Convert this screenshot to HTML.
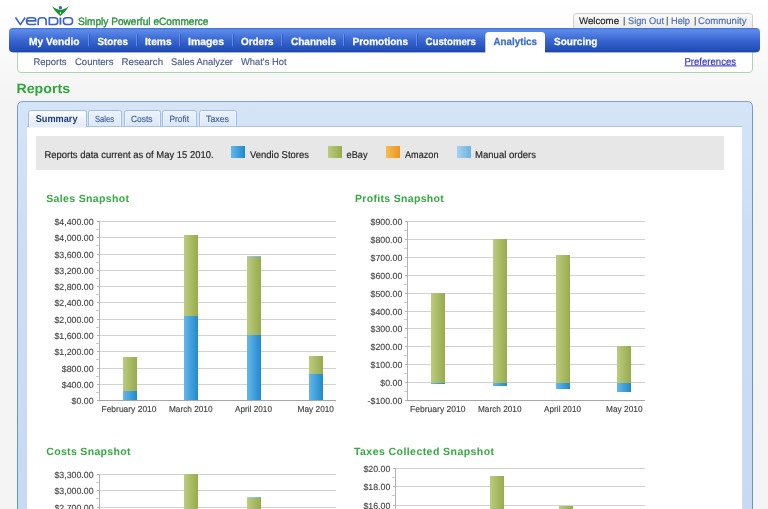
<!DOCTYPE html>
<html><head><meta charset="utf-8"><title>Vendio Reports</title>
<style>
html,body{margin:0;padding:0;width:768px;height:509px;overflow:hidden;background:#f2f2f2;font-family:"Liberation Sans", sans-serif;}
svg{display:block;will-change:transform} text{text-rendering:geometricPrecision}
</style></head><body>
<svg width="768" height="509" viewBox="0 0 768 509">
<defs>
<linearGradient id="bg" x1="0" y1="0" x2="0" y2="1" gradientUnits="objectBoundingBox"><stop offset="0" stop-color="#ffffff"/><stop offset="0.25" stop-color="#fdfdfd"/><stop offset="1" stop-color="#f4f4f4"/></linearGradient>
<linearGradient id="nav" x1="0" y1="0" x2="0" y2="1"><stop offset="0" stop-color="#3e6fd8"/><stop offset="0.08" stop-color="#5d8ce9"/><stop offset="0.5" stop-color="#3966d2"/><stop offset="1" stop-color="#1b48b0"/></linearGradient>
<linearGradient id="atab" x1="0" y1="0" x2="0" y2="1"><stop offset="0" stop-color="#ffffff"/><stop offset="1" stop-color="#f4f6fb"/></linearGradient>
<linearGradient id="wel" x1="0" y1="0" x2="0" y2="1"><stop offset="0" stop-color="#fbfbfb"/><stop offset="1" stop-color="#ececec"/></linearGradient>
<linearGradient id="tab" x1="0" y1="0" x2="0" y2="1"><stop offset="0" stop-color="#edf3fb"/><stop offset="1" stop-color="#dae6f7"/></linearGradient>
<linearGradient id="tabA" x1="0" y1="0" x2="0" y2="1"><stop offset="0" stop-color="#ffffff"/><stop offset="1" stop-color="#dfe9f8"/></linearGradient>
<linearGradient id="gB" x1="0" y1="0" x2="1" y2="0"><stop offset="0" stop-color="#64b7ea"/><stop offset="1" stop-color="#2189cc"/></linearGradient>
<linearGradient id="gG" x1="0" y1="0" x2="1" y2="0"><stop offset="0" stop-color="#bccb80"/><stop offset="1" stop-color="#97ab4b"/></linearGradient>
<linearGradient id="gO" x1="0" y1="0" x2="1" y2="0"><stop offset="0" stop-color="#f7bd52"/><stop offset="1" stop-color="#e8961e"/></linearGradient>
<linearGradient id="gL" x1="0" y1="0" x2="1" y2="0"><stop offset="0" stop-color="#a6d2ef"/><stop offset="1" stop-color="#6cb3e0"/></linearGradient>
<linearGradient id="panel" x1="0" y1="0" x2="0" y2="1"><stop offset="0" stop-color="#d6e4f7"/><stop offset="0.3" stop-color="#cddef4"/><stop offset="1" stop-color="#c8daf2"/></linearGradient>
<linearGradient id="pborder" x1="0" y1="0" x2="0" y2="1"><stop offset="0" stop-color="#80a4d8"/><stop offset="0.03" stop-color="#7298d2"/><stop offset="1" stop-color="#6a92d0"/></linearGradient>
</defs>
<rect x="0" y="0" width="768" height="509" fill="#f4f4f4"/>
<rect x="0" y="0" width="768" height="100" fill="url(#bg)"/>
<g fill="none" stroke="#3a62cc" stroke-width="1.6" stroke-linejoin="round">
<path d="M15.5,17.5 L20.4,24.6 L25.2,17.5"/>
<path d="M36,23.8 C35.6,24.3 35,24.5 34.2,24.5 H29.6 Q26.6,24.5 26.6,21.5 V20.4 Q26.6,17.8 29.6,17.8 H33 Q35.8,17.8 35.8,20.4 V20.9 H26.6"/>
<path d="M38.2,25.3 V20.6 Q38.2,17.8 41.2,17.8 H43.2 Q46.1,17.8 46.1,20.6 V25.3"/>
<path d="M49.3,17.8 H54.8 Q57.7,17.8 57.7,20.6 V21.7 Q57.7,24.5 54.8,24.5 H49.3 Z"/>
<path d="M60.4,17.6 V24.7" stroke-width="1.8"/>
<rect x="63.4" y="17.8" width="9.1" height="6.7" rx="2.9" ry="2.9"/>
</g>
<path d="M52.1,6.0 Q56.5,9.8 60.4,9.8 Q64.3,9.8 69.0,6.0 Q66.2,11.6 60.4,15.9 Q54.6,11.6 52.1,6.0 Z" fill="#1a9430"/>
<ellipse cx="60.4" cy="13" rx="0.6" ry="0.9" fill="#ffffff"/>
<circle cx="60.4" cy="7.65" r="1.7" fill="#3a62cc"/>

<path d="M573.5,28.5 V16 Q573.5,13.5 576,13.5 H750 Q752.5,13.5 752.5,16 V28.5" fill="url(#wel)" stroke="#cfcfcf" stroke-width="1"/>
<rect x="623.7" y="17" width="1" height="8.5" fill="#555"/>
<rect x="666.7" y="17" width="1" height="8.5" fill="#555"/>
<rect x="694.7" y="17" width="1" height="8.5" fill="#555"/>
<path d="M17.5,48 V69 Q17.5,72.5 21,72.5 H749 Q752.5,72.5 752.5,69 V48" fill="#ffffff" stroke="#a9d6ae" stroke-width="1"/>
<rect x="9" y="28" width="751" height="24.2" rx="4" ry="4" fill="url(#nav)"/>
<rect x="13" y="51.6" width="743" height="0.6" fill="#1a45a8"/>
<rect x="88" y="34" width="1" height="12" fill="#7098e6" opacity="0.75"/>
<rect x="89" y="34" width="1" height="12" fill="#2452bd" opacity="0.6"/>
<rect x="136" y="34" width="1" height="12" fill="#7098e6" opacity="0.75"/>
<rect x="137" y="34" width="1" height="12" fill="#2452bd" opacity="0.6"/>
<rect x="179" y="34" width="1" height="12" fill="#7098e6" opacity="0.75"/>
<rect x="180" y="34" width="1" height="12" fill="#2452bd" opacity="0.6"/>
<rect x="232" y="34" width="1" height="12" fill="#7098e6" opacity="0.75"/>
<rect x="233" y="34" width="1" height="12" fill="#2452bd" opacity="0.6"/>
<rect x="281" y="34" width="1" height="12" fill="#7098e6" opacity="0.75"/>
<rect x="282" y="34" width="1" height="12" fill="#2452bd" opacity="0.6"/>
<rect x="343" y="34" width="1" height="12" fill="#7098e6" opacity="0.75"/>
<rect x="344" y="34" width="1" height="12" fill="#2452bd" opacity="0.6"/>
<rect x="416" y="34" width="1" height="12" fill="#7098e6" opacity="0.75"/>
<rect x="417" y="34" width="1" height="12" fill="#2452bd" opacity="0.6"/>
<path d="M485.3,53.2 V35.5 Q485.3,32 488.8,32 H541.5 Q545,32 545,35.5 V53.2 Z" fill="#ffffff"/>
<path d="M17.5,520 V107 Q17.5,101.5 23,101.5 H747 Q752.5,101.5 752.5,107 V520" fill="url(#panel)" stroke="url(#pborder)" stroke-width="1"/>
<rect x="27" y="126.5" width="715" height="400" fill="#ffffff"/>
<rect x="27" y="126" width="715" height="1" fill="#a9c2e6"/>
<path d="M28.5,127 V112.5 Q28.5,110.5 30.5,110.5 H84.5 Q86.5,110.5 86.5,112.5 V127" fill="url(#tabA)" stroke="#9fbde6" stroke-width="1"/>
<path d="M29.5,127 V113 Q29.5,111.5 31.0,111.5 H84.0 Q85.5,111.5 85.5,113 V127" fill="none" stroke="#f3f7fd" stroke-width="1" opacity="0.7"/>
<path d="M88.5,127 V112.5 Q88.5,110.5 90.5,110.5 H119.5 Q121.5,110.5 121.5,112.5 V127" fill="url(#tab)" stroke="#9fbde6" stroke-width="1"/>
<path d="M89.5,127 V113 Q89.5,111.5 91.0,111.5 H119.0 Q120.5,111.5 120.5,113 V127" fill="none" stroke="#f3f7fd" stroke-width="1" opacity="0.7"/>
<path d="M124.5,127 V112.5 Q124.5,110.5 126.5,110.5 H158.5 Q160.5,110.5 160.5,112.5 V127" fill="url(#tab)" stroke="#9fbde6" stroke-width="1"/>
<path d="M125.5,127 V113 Q125.5,111.5 127.0,111.5 H158.0 Q159.5,111.5 159.5,113 V127" fill="none" stroke="#f3f7fd" stroke-width="1" opacity="0.7"/>
<path d="M162.5,127 V112.5 Q162.5,110.5 164.5,110.5 H194.5 Q196.5,110.5 196.5,112.5 V127" fill="url(#tab)" stroke="#9fbde6" stroke-width="1"/>
<path d="M163.5,127 V113 Q163.5,111.5 165.0,111.5 H194.0 Q195.5,111.5 195.5,113 V127" fill="none" stroke="#f3f7fd" stroke-width="1" opacity="0.7"/>
<path d="M199.5,127 V112.5 Q199.5,110.5 201.5,110.5 H234.5 Q236.5,110.5 236.5,112.5 V127" fill="url(#tab)" stroke="#9fbde6" stroke-width="1"/>
<path d="M200.5,127 V113 Q200.5,111.5 202.0,111.5 H234.0 Q235.5,111.5 235.5,113 V127" fill="none" stroke="#f3f7fd" stroke-width="1" opacity="0.7"/>
<rect x="27" y="126" width="715" height="1" fill="#a9c2e6"/>
<rect x="29" y="125.5" width="57" height="2" fill="#e6eefa"/>
<rect x="36" y="136" width="688" height="34" fill="#e7e7e7"/>
<rect x="231" y="146" width="14" height="12" fill="url(#gB)"/>
<rect x="328" y="146" width="14" height="12" fill="url(#gG)"/>
<rect x="386" y="146" width="14" height="12" fill="url(#gO)"/>
<rect x="457" y="146" width="14" height="12" fill="url(#gL)"/>
<rect x="99" y="221" width="237" height="1" fill="#d2d2cf"/>
<rect x="99" y="237" width="237" height="1" fill="#d2d2cf"/>
<rect x="99" y="254" width="237" height="1" fill="#d2d2cf"/>
<rect x="99" y="270" width="237" height="1" fill="#d2d2cf"/>
<rect x="99" y="286" width="237" height="1" fill="#d2d2cf"/>
<rect x="99" y="302" width="237" height="1" fill="#d2d2cf"/>
<rect x="99" y="319" width="237" height="1" fill="#d2d2cf"/>
<rect x="99" y="335" width="237" height="1" fill="#d2d2cf"/>
<rect x="99" y="351" width="237" height="1" fill="#d2d2cf"/>
<rect x="99" y="368" width="237" height="1" fill="#d2d2cf"/>
<rect x="99" y="384" width="237" height="1" fill="#d2d2cf"/>
<rect x="123" y="391" width="14" height="9" fill="url(#gB)"/>
<rect x="123" y="357" width="14" height="34" fill="url(#gG)"/>
<rect x="184" y="316" width="14" height="84" fill="url(#gB)"/>
<rect x="184" y="235" width="14" height="81" fill="url(#gG)"/>
<rect x="247" y="335" width="14" height="65" fill="url(#gB)"/>
<rect x="247" y="257" width="14" height="78" fill="url(#gG)"/>
<rect x="247" y="256" width="14" height="1" fill="url(#gL)"/>
<rect x="309" y="374" width="14" height="26" fill="url(#gB)"/>
<rect x="309" y="356" width="14" height="18" fill="url(#gG)"/>
<rect x="99" y="221" width="1" height="180" fill="#b3b3b3"/>
<rect x="99" y="400" width="237" height="1" fill="#a6a6a6"/>
<rect x="97" y="221" width="2" height="1" fill="#b3b3b3"/>
<rect x="96" y="229" width="3" height="1" fill="#b3b3b3" opacity="0.7"/>
<rect x="97" y="237" width="2" height="1" fill="#b3b3b3"/>
<rect x="96" y="245" width="3" height="1" fill="#b3b3b3" opacity="0.7"/>
<rect x="97" y="254" width="2" height="1" fill="#b3b3b3"/>
<rect x="96" y="262" width="3" height="1" fill="#b3b3b3" opacity="0.7"/>
<rect x="97" y="270" width="2" height="1" fill="#b3b3b3"/>
<rect x="96" y="278" width="3" height="1" fill="#b3b3b3" opacity="0.7"/>
<rect x="97" y="286" width="2" height="1" fill="#b3b3b3"/>
<rect x="96" y="294" width="3" height="1" fill="#b3b3b3" opacity="0.7"/>
<rect x="97" y="302" width="2" height="1" fill="#b3b3b3"/>
<rect x="96" y="310" width="3" height="1" fill="#b3b3b3" opacity="0.7"/>
<rect x="97" y="319" width="2" height="1" fill="#b3b3b3"/>
<rect x="96" y="327" width="3" height="1" fill="#b3b3b3" opacity="0.7"/>
<rect x="97" y="335" width="2" height="1" fill="#b3b3b3"/>
<rect x="96" y="343" width="3" height="1" fill="#b3b3b3" opacity="0.7"/>
<rect x="97" y="351" width="2" height="1" fill="#b3b3b3"/>
<rect x="96" y="359" width="3" height="1" fill="#b3b3b3" opacity="0.7"/>
<rect x="97" y="368" width="2" height="1" fill="#b3b3b3"/>
<rect x="96" y="376" width="3" height="1" fill="#b3b3b3" opacity="0.7"/>
<rect x="97" y="384" width="2" height="1" fill="#b3b3b3"/>
<rect x="96" y="392" width="3" height="1" fill="#b3b3b3" opacity="0.7"/>
<rect x="97" y="400" width="2" height="1" fill="#b3b3b3"/>
<text x="93.6" y="224.70" text-anchor="end" font-family='"Liberation Sans", sans-serif' font-size="8.8" fill="#444" stroke="#444" stroke-width="0.12">$4,400.00</text>
<text x="93.6" y="240.70" text-anchor="end" font-family='"Liberation Sans", sans-serif' font-size="8.8" fill="#444" stroke="#444" stroke-width="0.12">$4,000.00</text>
<text x="93.6" y="257.70" text-anchor="end" font-family='"Liberation Sans", sans-serif' font-size="8.8" fill="#444" stroke="#444" stroke-width="0.12">$3,600.00</text>
<text x="93.6" y="273.70" text-anchor="end" font-family='"Liberation Sans", sans-serif' font-size="8.8" fill="#444" stroke="#444" stroke-width="0.12">$3,200.00</text>
<text x="93.6" y="289.70" text-anchor="end" font-family='"Liberation Sans", sans-serif' font-size="8.8" fill="#444" stroke="#444" stroke-width="0.12">$2,800.00</text>
<text x="93.6" y="305.70" text-anchor="end" font-family='"Liberation Sans", sans-serif' font-size="8.8" fill="#444" stroke="#444" stroke-width="0.12">$2,400.00</text>
<text x="93.6" y="322.70" text-anchor="end" font-family='"Liberation Sans", sans-serif' font-size="8.8" fill="#444" stroke="#444" stroke-width="0.12">$2,000.00</text>
<text x="93.6" y="338.70" text-anchor="end" font-family='"Liberation Sans", sans-serif' font-size="8.8" fill="#444" stroke="#444" stroke-width="0.12">$1,600.00</text>
<text x="93.6" y="354.70" text-anchor="end" font-family='"Liberation Sans", sans-serif' font-size="8.8" fill="#444" stroke="#444" stroke-width="0.12">$1,200.00</text>
<text x="93.6" y="371.70" text-anchor="end" font-family='"Liberation Sans", sans-serif' font-size="8.8" fill="#444" stroke="#444" stroke-width="0.12">$800.00</text>
<text x="93.6" y="387.70" text-anchor="end" font-family='"Liberation Sans", sans-serif' font-size="8.8" fill="#444" stroke="#444" stroke-width="0.12">$400.00</text>
<text x="93.6" y="403.70" text-anchor="end" font-family='"Liberation Sans", sans-serif' font-size="8.8" fill="#444" stroke="#444" stroke-width="0.12">$0.00</text>
<rect x="407" y="221" width="238" height="1" fill="#d2d2cf"/>
<rect x="407" y="239" width="238" height="1" fill="#d2d2cf"/>
<rect x="407" y="257" width="238" height="1" fill="#d2d2cf"/>
<rect x="407" y="275" width="238" height="1" fill="#d2d2cf"/>
<rect x="407" y="293" width="238" height="1" fill="#d2d2cf"/>
<rect x="407" y="311" width="238" height="1" fill="#d2d2cf"/>
<rect x="407" y="328" width="238" height="1" fill="#d2d2cf"/>
<rect x="407" y="346" width="238" height="1" fill="#d2d2cf"/>
<rect x="407" y="364" width="238" height="1" fill="#d2d2cf"/>
<rect x="407" y="382" width="238" height="1" fill="#d2d2cf"/>
<rect x="431" y="293" width="14" height="90" fill="url(#gG)"/>
<rect x="431" y="383" width="14" height="1" fill="url(#gB)"/>
<rect x="493" y="239" width="14" height="144" fill="url(#gG)"/>
<rect x="493" y="383" width="14" height="3" fill="url(#gB)"/>
<rect x="556" y="255" width="14" height="128" fill="url(#gG)"/>
<rect x="556" y="383" width="14" height="6" fill="url(#gB)"/>
<rect x="617" y="346" width="14" height="37" fill="url(#gG)"/>
<rect x="617" y="383" width="14" height="9" fill="url(#gB)"/>
<rect x="407" y="221" width="1" height="180" fill="#b3b3b3"/>
<rect x="407" y="400" width="238" height="1" fill="#a6a6a6"/>
<rect x="405" y="221" width="2" height="1" fill="#b3b3b3"/>
<rect x="404" y="230" width="3" height="1" fill="#b3b3b3" opacity="0.7"/>
<rect x="405" y="239" width="2" height="1" fill="#b3b3b3"/>
<rect x="404" y="248" width="3" height="1" fill="#b3b3b3" opacity="0.7"/>
<rect x="405" y="257" width="2" height="1" fill="#b3b3b3"/>
<rect x="404" y="266" width="3" height="1" fill="#b3b3b3" opacity="0.7"/>
<rect x="405" y="275" width="2" height="1" fill="#b3b3b3"/>
<rect x="404" y="284" width="3" height="1" fill="#b3b3b3" opacity="0.7"/>
<rect x="405" y="293" width="2" height="1" fill="#b3b3b3"/>
<rect x="404" y="302" width="3" height="1" fill="#b3b3b3" opacity="0.7"/>
<rect x="405" y="311" width="2" height="1" fill="#b3b3b3"/>
<rect x="404" y="319" width="3" height="1" fill="#b3b3b3" opacity="0.7"/>
<rect x="405" y="328" width="2" height="1" fill="#b3b3b3"/>
<rect x="404" y="337" width="3" height="1" fill="#b3b3b3" opacity="0.7"/>
<rect x="405" y="346" width="2" height="1" fill="#b3b3b3"/>
<rect x="404" y="355" width="3" height="1" fill="#b3b3b3" opacity="0.7"/>
<rect x="405" y="364" width="2" height="1" fill="#b3b3b3"/>
<rect x="404" y="373" width="3" height="1" fill="#b3b3b3" opacity="0.7"/>
<rect x="405" y="382" width="2" height="1" fill="#b3b3b3"/>
<rect x="404" y="391" width="3" height="1" fill="#b3b3b3" opacity="0.7"/>
<rect x="405" y="400" width="2" height="1" fill="#b3b3b3"/>
<text x="402.3" y="224.70" text-anchor="end" font-family='"Liberation Sans", sans-serif' font-size="8.8" fill="#444" stroke="#444" stroke-width="0.12">$900.00</text>
<text x="402.3" y="242.70" text-anchor="end" font-family='"Liberation Sans", sans-serif' font-size="8.8" fill="#444" stroke="#444" stroke-width="0.12">$800.00</text>
<text x="402.3" y="260.70" text-anchor="end" font-family='"Liberation Sans", sans-serif' font-size="8.8" fill="#444" stroke="#444" stroke-width="0.12">$700.00</text>
<text x="402.3" y="278.70" text-anchor="end" font-family='"Liberation Sans", sans-serif' font-size="8.8" fill="#444" stroke="#444" stroke-width="0.12">$600.00</text>
<text x="402.3" y="296.70" text-anchor="end" font-family='"Liberation Sans", sans-serif' font-size="8.8" fill="#444" stroke="#444" stroke-width="0.12">$500.00</text>
<text x="402.3" y="314.70" text-anchor="end" font-family='"Liberation Sans", sans-serif' font-size="8.8" fill="#444" stroke="#444" stroke-width="0.12">$400.00</text>
<text x="402.3" y="331.70" text-anchor="end" font-family='"Liberation Sans", sans-serif' font-size="8.8" fill="#444" stroke="#444" stroke-width="0.12">$300.00</text>
<text x="402.3" y="349.70" text-anchor="end" font-family='"Liberation Sans", sans-serif' font-size="8.8" fill="#444" stroke="#444" stroke-width="0.12">$200.00</text>
<text x="402.3" y="367.70" text-anchor="end" font-family='"Liberation Sans", sans-serif' font-size="8.8" fill="#444" stroke="#444" stroke-width="0.12">$100.00</text>
<text x="402.3" y="385.70" text-anchor="end" font-family='"Liberation Sans", sans-serif' font-size="8.8" fill="#444" stroke="#444" stroke-width="0.12">$0.00</text>
<text x="402.3" y="403.70" text-anchor="end" font-family='"Liberation Sans", sans-serif' font-size="8.8" fill="#444" stroke="#444" stroke-width="0.12">-$100.00</text>
<rect x="99" y="474" width="237" height="1" fill="#d2d2cf"/>
<rect x="99" y="490" width="237" height="1" fill="#d2d2cf"/>
<rect x="99" y="507" width="237" height="1" fill="#d2d2cf"/>
<rect x="184" y="474" width="14" height="46" fill="url(#gG)"/>
<rect x="247" y="498" width="14" height="22" fill="url(#gG)"/>
<rect x="247" y="497" width="14" height="1" fill="url(#gL)"/>
<rect x="99" y="474" width="1" height="47" fill="#b3b3b3"/>
<rect x="97" y="474" width="2" height="1" fill="#b3b3b3"/>
<rect x="96" y="482" width="3" height="1" fill="#b3b3b3" opacity="0.7"/>
<rect x="97" y="490" width="2" height="1" fill="#b3b3b3"/>
<rect x="96" y="498" width="3" height="1" fill="#b3b3b3" opacity="0.7"/>
<rect x="97" y="507" width="2" height="1" fill="#b3b3b3"/>
<rect x="96" y="515" width="3" height="1" fill="#b3b3b3" opacity="0.7"/>
<text x="93.6" y="477.70" text-anchor="end" font-family='"Liberation Sans", sans-serif' font-size="8.8" fill="#444" stroke="#444" stroke-width="0.12">$3,300.00</text>
<text x="93.6" y="493.70" text-anchor="end" font-family='"Liberation Sans", sans-serif' font-size="8.8" fill="#444" stroke="#444" stroke-width="0.12">$3,000.00</text>
<text x="93.6" y="510.70" text-anchor="end" font-family='"Liberation Sans", sans-serif' font-size="8.8" fill="#444" stroke="#444" stroke-width="0.12">$2,700.00</text>
<text x="93.6" y="526.70" text-anchor="end" font-family='"Liberation Sans", sans-serif' font-size="8.8" fill="#444" stroke="#444" stroke-width="0.12">$2,400.00</text>
<rect x="395" y="468" width="250" height="1" fill="#d2d2cf"/>
<rect x="395" y="486" width="250" height="1" fill="#d2d2cf"/>
<rect x="395" y="505" width="250" height="1" fill="#d2d2cf"/>
<rect x="490" y="476" width="14" height="44" fill="url(#gG)"/>
<rect x="559" y="506" width="14" height="14" fill="url(#gG)"/>
<rect x="395" y="468" width="1" height="53" fill="#b3b3b3"/>
<rect x="393" y="468" width="2" height="1" fill="#b3b3b3"/>
<rect x="392" y="477" width="3" height="1" fill="#b3b3b3" opacity="0.7"/>
<rect x="393" y="486" width="2" height="1" fill="#b3b3b3"/>
<rect x="392" y="495" width="3" height="1" fill="#b3b3b3" opacity="0.7"/>
<rect x="393" y="505" width="2" height="1" fill="#b3b3b3"/>
<rect x="392" y="514" width="3" height="1" fill="#b3b3b3" opacity="0.7"/>
<text x="390.3" y="471.70" text-anchor="end" font-family='"Liberation Sans", sans-serif' font-size="8.8" fill="#444" stroke="#444" stroke-width="0.12">$20.00</text>
<text x="390.3" y="489.70" text-anchor="end" font-family='"Liberation Sans", sans-serif' font-size="8.8" fill="#444" stroke="#444" stroke-width="0.12">$18.00</text>
<text x="390.3" y="508.70" text-anchor="end" font-family='"Liberation Sans", sans-serif' font-size="8.8" fill="#444" stroke="#444" stroke-width="0.12">$16.00</text>
<text x="390.3" y="526.70" text-anchor="end" font-family='"Liberation Sans", sans-serif' font-size="8.8" fill="#444" stroke="#444" stroke-width="0.12">$14.00</text>
<rect x="684.5" y="65.4" width="51.8" height="1" fill="#2c2cc8"/>
<text x="78.00" y="25.2" font-family='"Liberation Sans", sans-serif' font-size="10.6" font-weight="normal" fill="#2b9640" textLength="130.51" lengthAdjust="spacingAndGlyphs" stroke="#2b9640" stroke-width="0.4">Simply Powerful eCommerce</text>
<text x="579.00" y="23.8" font-family='"Liberation Sans", sans-serif' font-size="9.6" font-weight="normal" fill="#202020" textLength="40.02" lengthAdjust="spacingAndGlyphs" stroke="#202020" stroke-width="0.15">Welcome</text>
<text x="628.00" y="23.8" font-family='"Liberation Sans", sans-serif' font-size="9.6" font-weight="normal" fill="#4a6cb0" textLength="36.00" lengthAdjust="spacingAndGlyphs" stroke="#4a6cb0" stroke-width="0.15">Sign Out</text>
<text x="671.00" y="23.8" font-family='"Liberation Sans", sans-serif' font-size="9.6" font-weight="normal" fill="#4a6cb0" textLength="19.00" lengthAdjust="spacingAndGlyphs" stroke="#4a6cb0" stroke-width="0.15">Help</text>
<text x="698.00" y="23.8" font-family='"Liberation Sans", sans-serif' font-size="9.6" font-weight="normal" fill="#4a6cb0" textLength="48.51" lengthAdjust="spacingAndGlyphs" stroke="#4a6cb0" stroke-width="0.15">Community</text>
<text x="29.00" y="44.6" font-family='"Liberation Sans", sans-serif' font-size="10.3" font-weight="bold" fill="#ffffff" textLength="50.51" lengthAdjust="spacingAndGlyphs" stroke="#ffffff" stroke-width="0.25">My Vendio</text>
<text x="97.50" y="44.6" font-family='"Liberation Sans", sans-serif' font-size="10.3" font-weight="bold" fill="#ffffff" textLength="30.52" lengthAdjust="spacingAndGlyphs" stroke="#ffffff" stroke-width="0.25">Stores</text>
<text x="145.00" y="44.6" font-family='"Liberation Sans", sans-serif' font-size="10.3" font-weight="bold" fill="#ffffff" textLength="26.58" lengthAdjust="spacingAndGlyphs" stroke="#ffffff" stroke-width="0.25">Items</text>
<text x="188.00" y="44.6" font-family='"Liberation Sans", sans-serif' font-size="10.3" font-weight="bold" fill="#ffffff" textLength="36.00" lengthAdjust="spacingAndGlyphs" stroke="#ffffff" stroke-width="0.25">Images</text>
<text x="241.00" y="44.6" font-family='"Liberation Sans", sans-serif' font-size="10.3" font-weight="bold" fill="#ffffff" textLength="32.52" lengthAdjust="spacingAndGlyphs" stroke="#ffffff" stroke-width="0.25">Orders</text>
<text x="291.00" y="44.6" font-family='"Liberation Sans", sans-serif' font-size="10.3" font-weight="bold" fill="#ffffff" textLength="45.01" lengthAdjust="spacingAndGlyphs" stroke="#ffffff" stroke-width="0.25">Channels</text>
<text x="352.50" y="44.6" font-family='"Liberation Sans", sans-serif' font-size="10.3" font-weight="bold" fill="#ffffff" textLength="55.50" lengthAdjust="spacingAndGlyphs" stroke="#ffffff" stroke-width="0.25">Promotions</text>
<text x="425.50" y="44.6" font-family='"Liberation Sans", sans-serif' font-size="10.3" font-weight="bold" fill="#ffffff" textLength="50.51" lengthAdjust="spacingAndGlyphs" stroke="#ffffff" stroke-width="0.25">Customers</text>
<text x="493.50" y="44.6" font-family='"Liberation Sans", sans-serif' font-size="10.3" font-weight="bold" fill="#3b6cc9" textLength="43.51" lengthAdjust="spacingAndGlyphs" stroke="#3b6cc9" stroke-width="0.25">Analytics</text>
<text x="554.00" y="44.6" font-family='"Liberation Sans", sans-serif' font-size="10.3" font-weight="bold" fill="#ffffff" textLength="43.51" lengthAdjust="spacingAndGlyphs" stroke="#ffffff" stroke-width="0.25">Sourcing</text>
<text x="33.50" y="64.7" font-family='"Liberation Sans", sans-serif' font-size="9.7" font-weight="normal" fill="#4a5c8c" textLength="33.08" lengthAdjust="spacingAndGlyphs" stroke="#4a5c8c" stroke-width="0.15">Reports</text>
<text x="75.00" y="64.7" font-family='"Liberation Sans", sans-serif' font-size="9.7" font-weight="normal" fill="#4a5c8c" textLength="38.51" lengthAdjust="spacingAndGlyphs" stroke="#4a5c8c" stroke-width="0.15">Counters</text>
<text x="121.50" y="64.7" font-family='"Liberation Sans", sans-serif' font-size="9.7" font-weight="normal" fill="#4a5c8c" textLength="41.53" lengthAdjust="spacingAndGlyphs" stroke="#4a5c8c" stroke-width="0.15">Research</text>
<text x="171.00" y="64.7" font-family='"Liberation Sans", sans-serif' font-size="9.7" font-weight="normal" fill="#4a5c8c" textLength="62.00" lengthAdjust="spacingAndGlyphs" stroke="#4a5c8c" stroke-width="0.15">Sales Analyzer</text>
<text x="241.00" y="64.7" font-family='"Liberation Sans", sans-serif' font-size="9.7" font-weight="normal" fill="#4a5c8c" textLength="45.51" lengthAdjust="spacingAndGlyphs" stroke="#4a5c8c" stroke-width="0.15">What&#x27;s Hot</text>
<text x="684.50" y="64.7" font-family='"Liberation Sans", sans-serif' font-size="10.2" font-weight="normal" fill="#2c2cc8" textLength="51.51" lengthAdjust="spacingAndGlyphs" stroke="#2c2cc8" stroke-width="0.15">Preferences</text>
<text x="16.50" y="92.9" font-family='"Liberation Sans", sans-serif' font-size="13.5" font-weight="bold" fill="#2ea83a" textLength="53.53" lengthAdjust="spacingAndGlyphs">Reports</text>
<text x="35.75" y="121.9" font-family='"Liberation Sans", sans-serif' font-size="9.9" font-weight="bold" fill="#1f3a7a" textLength="41.76" lengthAdjust="spacingAndGlyphs">Summary</text>
<text x="95.00" y="121.9" font-family='"Liberation Sans", sans-serif' font-size="9.0" font-weight="normal" fill="#3d5c98" textLength="19.02" lengthAdjust="spacingAndGlyphs" stroke="#3d5c98" stroke-width="0.15">Sales</text>
<text x="131.00" y="121.9" font-family='"Liberation Sans", sans-serif' font-size="9.0" font-weight="normal" fill="#3d5c98" textLength="21.58" lengthAdjust="spacingAndGlyphs" stroke="#3d5c98" stroke-width="0.15">Costs</text>
<text x="169.50" y="121.9" font-family='"Liberation Sans", sans-serif' font-size="9.0" font-weight="normal" fill="#3d5c98" textLength="19.52" lengthAdjust="spacingAndGlyphs" stroke="#3d5c98" stroke-width="0.15">Profit</text>
<text x="206.00" y="121.9" font-family='"Liberation Sans", sans-serif' font-size="9.0" font-weight="normal" fill="#3d5c98" textLength="23.03" lengthAdjust="spacingAndGlyphs" stroke="#3d5c98" stroke-width="0.15">Taxes</text>
<text x="44.50" y="157.7" font-family='"Liberation Sans", sans-serif' font-size="9.9" font-weight="normal" fill="#222222" textLength="169.02" lengthAdjust="spacingAndGlyphs" stroke="#222222" stroke-width="0.15">Reports data current as of May 15 2010.</text>
<text x="250.00" y="157.7" font-family='"Liberation Sans", sans-serif' font-size="9.9" font-weight="normal" fill="#222222" textLength="59.00" lengthAdjust="spacingAndGlyphs" stroke="#222222" stroke-width="0.15">Vendio Stores</text>
<text x="346.50" y="157.7" font-family='"Liberation Sans", sans-serif' font-size="9.9" font-weight="normal" fill="#222222" textLength="21.02" lengthAdjust="spacingAndGlyphs" stroke="#222222" stroke-width="0.15">eBay</text>
<text x="405.00" y="157.7" font-family='"Liberation Sans", sans-serif' font-size="9.9" font-weight="normal" fill="#222222" textLength="33.51" lengthAdjust="spacingAndGlyphs" stroke="#222222" stroke-width="0.15">Amazon</text>
<text x="475.00" y="157.7" font-family='"Liberation Sans", sans-serif' font-size="9.9" font-weight="normal" fill="#222222" textLength="61.02" lengthAdjust="spacingAndGlyphs" stroke="#222222" stroke-width="0.15">Manual orders</text>
<text x="46.25" y="201.9" font-family='"Liberation Sans", sans-serif' font-size="10.5" font-weight="bold" fill="#33aa40" textLength="82.75" lengthAdjust="spacing">Sales Snapshot</text>
<text x="355.00" y="201.9" font-family='"Liberation Sans", sans-serif' font-size="10.5" font-weight="bold" fill="#33aa40" textLength="88.75" lengthAdjust="spacing">Profits Snapshot</text>
<text x="46.25" y="454.6" font-family='"Liberation Sans", sans-serif' font-size="10.5" font-weight="bold" fill="#33aa40" textLength="84.27" lengthAdjust="spacing">Costs Snapshot</text>
<text x="354.00" y="454.6" font-family='"Liberation Sans", sans-serif' font-size="10.5" font-weight="bold" fill="#33aa40" textLength="140.01" lengthAdjust="spacing">Taxes Collected Snapshot</text>
<text x="101.50" y="411.6" font-family='"Liberation Sans", sans-serif' font-size="8.7" font-weight="normal" fill="#444444" textLength="55.01" lengthAdjust="spacingAndGlyphs" stroke="#444444" stroke-width="0.15">February 2010</text>
<text x="169.00" y="411.6" font-family='"Liberation Sans", sans-serif' font-size="8.7" font-weight="normal" fill="#444444" textLength="43.51" lengthAdjust="spacingAndGlyphs" stroke="#444444" stroke-width="0.15">March 2010</text>
<text x="235.00" y="411.6" font-family='"Liberation Sans", sans-serif' font-size="8.7" font-weight="normal" fill="#444444" textLength="37.01" lengthAdjust="spacingAndGlyphs" stroke="#444444" stroke-width="0.15">April 2010</text>
<text x="297.50" y="411.6" font-family='"Liberation Sans", sans-serif' font-size="8.7" font-weight="normal" fill="#444444" textLength="36.50" lengthAdjust="spacingAndGlyphs" stroke="#444444" stroke-width="0.15">May 2010</text>
<text x="410.00" y="411.6" font-family='"Liberation Sans", sans-serif' font-size="8.7" font-weight="normal" fill="#444444" textLength="55.52" lengthAdjust="spacingAndGlyphs" stroke="#444444" stroke-width="0.15">February 2010</text>
<text x="478.00" y="411.6" font-family='"Liberation Sans", sans-serif' font-size="8.7" font-weight="normal" fill="#444444" textLength="43.51" lengthAdjust="spacingAndGlyphs" stroke="#444444" stroke-width="0.15">March 2010</text>
<text x="544.00" y="411.6" font-family='"Liberation Sans", sans-serif' font-size="8.7" font-weight="normal" fill="#444444" textLength="37.04" lengthAdjust="spacingAndGlyphs" stroke="#444444" stroke-width="0.15">April 2010</text>
<text x="606.00" y="411.6" font-family='"Liberation Sans", sans-serif' font-size="8.7" font-weight="normal" fill="#444444" textLength="36.51" lengthAdjust="spacingAndGlyphs" stroke="#444444" stroke-width="0.15">May 2010</text>
</svg>
</body></html>
